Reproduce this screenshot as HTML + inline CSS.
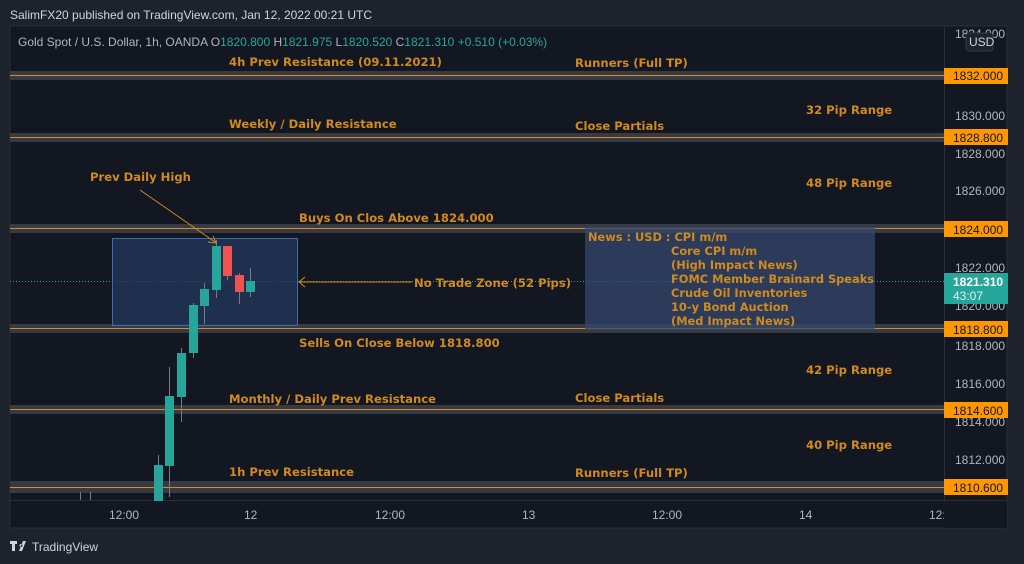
<!DOCTYPE html>
<html><head><style>
body{margin:0;width:1024px;height:564px;background:#1e222d;overflow:hidden;font-family:"Liberation Sans",sans-serif}
</style></head><body>
<svg width="1024" height="564" xmlns="http://www.w3.org/2000/svg" style="position:absolute;left:0;top:0">
<text x="10" y="19" fill="#d1d4dc" font-size="12">SalimFX20 published on TradingView.com, Jan 12, 2022 00:21 UTC</text>
<rect x="10" y="26" width="997" height="502" fill="#131722" stroke="#2a2e39"/>
<line x1="944.5" y1="26" x2="944.5" y2="528" stroke="#2a2e39"/>
<line x1="10" y1="500.5" x2="1007" y2="500.5" stroke="#2a2e39"/>
<g font-size="12">
<text x="18" y="46" fill="#b2b5be">Gold Spot / U.S. Dollar, 1h, OANDA <tspan>O</tspan><tspan fill="#26a69a">1820.800</tspan> H<tspan fill="#26a69a">1821.975</tspan> L<tspan fill="#26a69a">1820.520</tspan> C<tspan fill="#26a69a">1821.310</tspan> <tspan fill="#26a69a">+0.510 (+0.03%)</tspan></text>
</g>
<!-- level bands -->
<g>
<rect x="10" y="71" width="934" height="9" fill="#363a45"/><line x1="10" y1="75.5" x2="944" y2="75.5" stroke="#e08a1e"/>
<rect x="10" y="133" width="934" height="9" fill="#363a45"/><line x1="10" y1="137.5" x2="944" y2="137.5" stroke="#e08a1e"/>
<rect x="10" y="224" width="934" height="9" fill="#363a45"/><line x1="10" y1="228.5" x2="944" y2="228.5" stroke="#e08a1e"/>
<rect x="10" y="324" width="934" height="9" fill="#363a45"/><line x1="10" y1="328.5" x2="944" y2="328.5" stroke="#e08a1e"/>
<rect x="10" y="405" width="934" height="9" fill="#363a45"/><line x1="10" y1="409.5" x2="944" y2="409.5" stroke="#e08a1e"/>
<rect x="10" y="481" width="934" height="12" fill="#363a45"/><line x1="10" y1="487.5" x2="944" y2="487.5" stroke="#e08a1e"/>
</g>
<line x1="10" y1="281.5" x2="944" y2="281.5" stroke="#26a69a" stroke-dasharray="1 2"/>
<!-- news & zone boxes -->
<rect x="585" y="227" width="290" height="103" fill="#34486c" opacity="0.75"/>
<rect x="112.5" y="238.5" width="185" height="87" fill="#23365a" fill-opacity="0.8" stroke="#3d6bb3"/>
<!-- candles -->
<g stroke="#787b86">
<line x1="158.5" y1="455" x2="158.5" y2="500"/><line x1="169.5" y1="367" x2="169.5" y2="497"/>
<line x1="181.5" y1="348" x2="181.5" y2="422"/><line x1="193.5" y1="303" x2="193.5" y2="358"/>
<line x1="204.5" y1="283" x2="204.5" y2="324"/><line x1="216.5" y1="240" x2="216.5" y2="298"/>
<line x1="227.5" y1="246" x2="227.5" y2="280"/><line x1="239.5" y1="273" x2="239.5" y2="304"/>
<line x1="250.5" y1="268" x2="250.5" y2="297"/>
<line x1="80.5" y1="492" x2="80.5" y2="500"/><line x1="90.5" y1="492" x2="90.5" y2="500"/>
</g>
<g fill="#26a69a">
<rect x="154" y="465" width="9" height="36"/><rect x="165" y="396" width="9" height="70"/>
<rect x="177" y="353" width="9" height="44"/><rect x="189" y="305" width="9" height="48"/>
<rect x="200" y="289" width="9" height="17"/><rect x="212" y="246" width="9" height="44"/>
<rect x="246" y="281" width="9" height="11"/>
</g>
<g fill="#ef5350"><rect x="223" y="246" width="9" height="30"/><rect x="235" y="275" width="9" height="17"/></g>
<!-- arrows -->
<g stroke="#d08a1f" fill="none">
<line x1="140" y1="190" x2="215" y2="242"/><path d="M208 242 L216 243 L213 236"/>
<line x1="300" y1="282" x2="412" y2="282"/><path d="M305 277 L299 282 L305 287"/>
</g>
<!-- labels -->
<g fill="#d08a1f" font-size="11.6" font-weight="bold" font-family="'DejaVu Sans',sans-serif">
<text x="229" y="66">4h Prev Resistance (09.11.2021)</text>
<text x="575" y="67">Runners (Full TP)</text>
<text x="806" y="114">32 Pip Range</text>
<text x="229" y="128">Weekly / Daily Resistance</text>
<text x="575" y="130">Close Partials</text>
<text x="90" y="181">Prev Daily High</text>
<text x="806" y="187">48 Pip Range</text>
<text x="299" y="222">Buys On Clos Above 1824.000</text>
<text x="414" y="287">No Trade Zone (52 Pips)</text>
<text x="299" y="347">Sells On Close Below 1818.800</text>
<text x="806" y="374">42 Pip Range</text>
<text x="229" y="403">Monthly / Daily Prev Resistance</text>
<text x="575" y="402">Close Partials</text>
<text x="806" y="449">40 Pip Range</text>
<text x="229" y="476">1h Prev Resistance</text>
<text x="575" y="477">Runners (Full TP)</text>
</g>
<g fill="#d08a1f" font-size="11.4" font-weight="bold" font-family="'DejaVu Sans',sans-serif">
<text x="588" y="241">News : USD : CPI m/m</text>
<text x="671" y="255">Core CPI m/m</text>
<text x="671" y="269">(High Impact News)</text>
<text x="671" y="283">FOMC Member Brainard Speaks</text>
<text x="671" y="297">Crude Oil Inventories</text>
<text x="671" y="311">10-y Bond Auction</text>
<text x="671" y="325">(Med Impact News)</text>
</g>
<!-- price axis -->
<g fill="#b2b5be" font-size="12">
<text x="955" y="120">1830.000</text><text x="955" y="158">1828.000</text><text x="955" y="195">1826.000</text>
<text x="955" y="272">1822.000</text><text x="955" y="310">1820.000</text><text x="955" y="350">1818.000</text>
<text x="955" y="388">1816.000</text><text x="955" y="426">1814.000</text><text x="955" y="464">1812.000</text>
<text x="955" y="38">1834.000</text>
</g>
<rect x="966" y="33" width="27" height="18" rx="3" fill="#1e222d" stroke="#363a45"/>
<text x="969" y="46" fill="#d1d4dc" font-size="12">USD</text>
<g font-size="12" fill="#131722">
<rect x="944" y="68" width="64" height="16" fill="#ff9800"/><text x="953" y="80">1832.000</text>
<rect x="944" y="129" width="64" height="16" fill="#ff9800"/><text x="953" y="142">1828.800</text>
<rect x="944" y="221" width="64" height="16" fill="#ff9800"/><text x="953" y="234">1824.000</text>
<rect x="944" y="321" width="64" height="16" fill="#ff9800"/><text x="953" y="334">1818.800</text>
<rect x="944" y="402" width="64" height="16" fill="#ff9800"/><text x="953" y="415">1814.600</text>
<rect x="944" y="479" width="64" height="16" fill="#ff9800"/><text x="953" y="492">1810.600</text>
</g>
<rect x="944" y="273" width="64" height="31" fill="#26a69a"/>
<text x="953" y="286" fill="#fff" font-size="12" font-weight="bold">1821.310</text>
<text x="953" y="300" fill="#e0f2f1" font-size="12">43:07</text>
<!-- time axis -->
<g fill="#b2b5be" font-size="12">
<text x="109" y="519">12:00</text><text x="244" y="519">12</text><text x="375" y="519">12:00</text>
<text x="522" y="519">13</text><text x="652" y="519">12:00</text><text x="799" y="519">14</text><text x="929" y="519">12:</text>
</g>
<rect x="944" y="501" width="63" height="27" fill="#131722"/>
<!-- footer logo -->
<path d="M10 541h7v3h-2v7h-3v-7h-2z M21 544a1.5 1.5 0 1 0 0.01 0z M23 541h3l-4 10h-3z" fill="#d1d4dc"/>
<text x="32" y="551" fill="#d1d4dc" font-size="12">TradingView</text>
</svg>
</body></html>
